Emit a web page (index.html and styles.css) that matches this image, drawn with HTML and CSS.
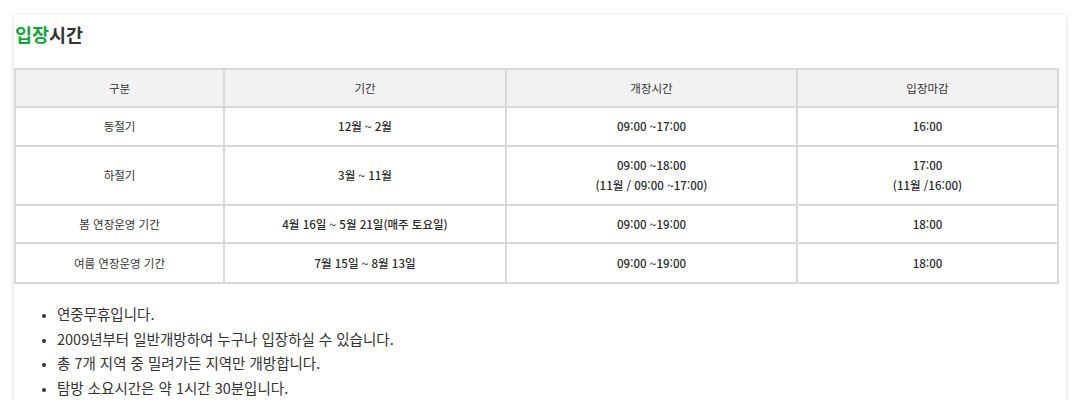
FILE: index.html
```html
<!DOCTYPE html>
<html lang="ko">
<head>
<meta charset="utf-8">
<title>입장시간</title>
<link rel="stylesheet" href="styles.css">
</head>
<body>
<section class="card">
  <h2 class="title"><span class="accent">입장</span>시간</h2>
  <table class="schedule">
    <colgroup>
      <col class="c1"><col class="c2"><col class="c3"><col class="c4">
    </colgroup>
    <thead>
      <tr><th>구분</th><th>기간</th><th>개장시간</th><th>입장마감</th></tr>
    </thead>
    <tbody>
      <tr><td>동절기</td><td class="num">12월 ~ 2월</td><td class="num">09:00 ~17:00</td><td class="num">16:00</td></tr>
      <tr class="tall"><td>하절기</td><td class="num">3월 ~ 11월</td><td class="num">09:00 ~18:00<br>(11월 / 09:00 ~17:00)</td><td class="num">17:00<br>(11월 /16:00)</td></tr>
      <tr><td>봄 연장운영 기간</td><td class="num">4월 16일 ~ 5월 21일(매주 토요일)</td><td class="num">09:00 ~19:00</td><td class="num">18:00</td></tr>
      <tr class="last"><td>여름 연장운영 기간</td><td class="num">7월 15일 ~ 8월 13일</td><td class="num">09:00 ~19:00</td><td class="num">18:00</td></tr>
    </tbody>
  </table>
  <ul class="notes">
    <li>연중무휴입니다.</li>
    <li>2009년부터 일반개방하여 누구나 입장하실 수 있습니다.</li>
    <li>총 7개 지역 중 밀려가든 지역만 개방합니다.</li>
    <li>탐방 소요시간은 약 1시간 30분입니다.</li>
  </ul>
</section>
</body>
</html>
```
FILE: styles.css
```css
html, body {
  margin: 0;
  padding: 0;
  background: #ffffff;
}
body {
  font-family: "Noto Sans CJK KR", "Noto Sans", sans-serif;
  color: #333333;
  padding: 15px 15px 0 14px;
}
.card {
  background: #ffffff;
  width: 1043px;
  height: 385px;
  padding: 0 9px 0 0;
  box-shadow: 0 1px 5px rgba(0, 0, 0, 0.16);
  overflow: hidden;
}
.title {
  margin: 0;
  padding: 6px 0 0 1px;
  height: 47px;
  font-size: 18.5px;
  line-height: 26px;
  font-weight: 700;
  color: #333333;
}
.accent {
  color: #12a43c;
}
.schedule {
  width: 1043px;
  border-collapse: collapse;
  border: 2px solid #d9d9d9;
  font-size: 11.5px;
  line-height: 20px;
  color: #333;
  table-layout: fixed;
}
.c1 { width: 209px; }
.c2 { width: 282px; }
.c3 { width: 291px; }
.c4 { width: 261px; }
.schedule th,
.schedule td {
  border: 2px solid #d9d9d9;
  text-align: center;
  padding: 8px 4px;
  font-weight: 400;
}
.schedule th {
  background: #f2f2f2;
}
.schedule tbody tr:first-child td {
  padding-top: 8px;
  padding-bottom: 9px;
}
.schedule tr.tall td {
  padding-top: 8px;
  padding-bottom: 9px;
}
.schedule tr.last td {
  padding-top: 9px;
  padding-bottom: 9px;
}
.schedule td.num {
  font-weight: 500;
  color: #2b2b2b;
}
.notes {
  margin: 18px 0 0 0;
  padding: 0 0 0 43px;
  font-size: 14.5px;
  line-height: 24.5px;
  color: #333;
}
.notes li::marker {
  font-size: 11px;
}
```
